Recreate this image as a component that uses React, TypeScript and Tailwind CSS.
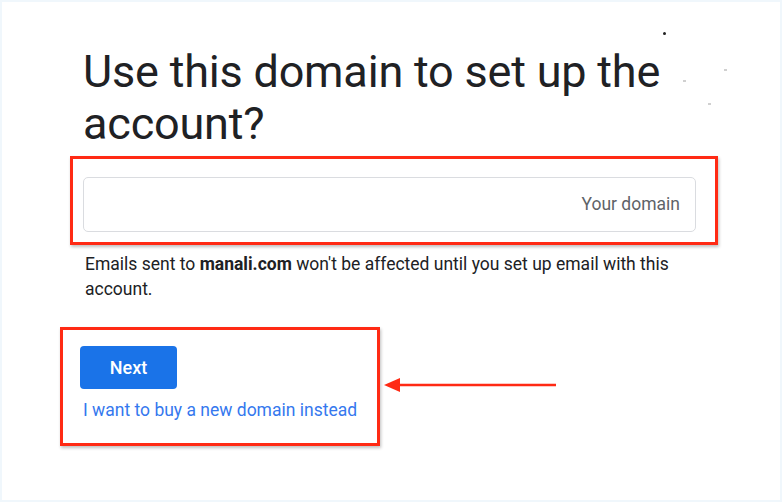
import React from 'react';

const sans = "font-['Roboto','Liberation_Sans',sans-serif]";

export default function App() {
  return (
    <div className={`relative h-[502px] w-[782px] overflow-hidden border-2 border-[#f0f7fc] bg-white ${sans}`}>
      {/* stray specks from the capture */}
      <span className="absolute left-[661px] top-[30px] h-[3px] w-[3px] rounded-full bg-[#222]" />
      <span className="absolute left-[681px] top-[78px] h-[2px] w-[3px] bg-[#d0d0d0]" />
      <span className="absolute left-[722px] top-[67px] h-[2px] w-[3px] bg-[#d0d0d0]" />
      <span className="absolute left-[706px] top-[101px] h-[2px] w-[3px] bg-[#d0d0d0]" />

      <div className="flex flex-col pl-[58px] pt-[44px]">
        <h1 className="ml-[23px] text-[45px] font-normal leading-[52px] tracking-[-0.2px] text-[#202124]">
          Use this domain to set up the
          <br />
          account?
        </h1>

        <div className="ml-[10px] mt-[6px] w-[648px] border-[3px] border-[#ff2a14] pb-[10px] pl-[10px] pr-[19px] pt-[18px] shadow-[1px_2px_3px_rgba(0,0,0,0.25)]">
          <div className="flex h-[55px] items-center justify-end rounded-[5px] border border-[#dadce0] px-[15px]">
            <span className="text-[17.5px] text-[#5f6368]">Your domain</span>
          </div>
        </div>

        <p className="ml-[25px] mt-[7px] w-[620px] text-[17.5px] leading-[25px] text-[#202124]">
          Emails sent to <span className="font-bold">manali.com</span> won't be affected until you set up email with this account.
        </p>

        <div className="mt-[25px] flex items-start">
          <div className="flex w-[320px] flex-col items-start border-[3px] border-[#ff2a14] pb-[20px] pl-[17px] pt-[16px] shadow-[1px_2px_3px_rgba(0,0,0,0.25)]">
            <button className="flex h-[43px] w-[97px] items-center justify-center rounded-[4px] bg-[#1a73e8] text-[18px] font-medium text-white">
              Next
            </button>
            <a className="ml-[3px] mt-[8px] text-[17.5px] leading-[26px] text-[#3578ee]">
              I want to buy a new domain instead
            </a>
          </div>
          <svg className="ml-[3px] mt-[49px]" width="175" height="18" viewBox="0 0 175 18">
            <path d="M173 9 H16" stroke="#ff2a14" strokeWidth="2.5" />
            <path d="M1 9 L17 2 L17 16 Z" fill="#ff2a14" />
          </svg>
        </div>
      </div>
    </div>
  );
}
